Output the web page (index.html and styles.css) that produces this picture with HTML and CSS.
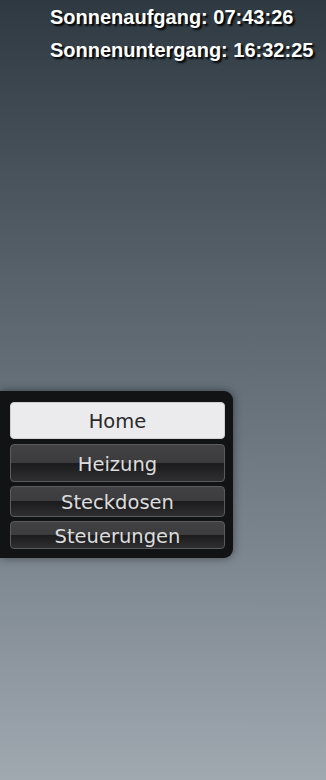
FILE: index.html
```html
<!DOCTYPE html>
<html lang="de">
<head>
<meta charset="utf-8">
<title>Haus</title>
<link rel="stylesheet" href="styles.css">
</head>
<body>
<div class="sun">
  <div class="sun-line">Sonnenaufgang: 07:43:26</div>
  <div class="sun-line">Sonnenuntergang: 16:32:25</div>
</div>
<nav class="menu">
  <a class="btn active h-home">Home</a>
  <a class="btn h-heizung">Heizung</a>
  <a class="btn h-steck">Steckdosen</a>
  <a class="btn h-steuer">Steuerungen</a>
</nav>
</body>
</html>
```
FILE: styles.css
```css
html {
  height: 100%;
  background: linear-gradient(to bottom, #2e3941 0%, #56616a 35%, #7b858d 70%, #a0a8b0 100%);
}
body {
  margin: 0;
  height: 780px;
  overflow: hidden;
}
.sun {
  padding: 1px 0 0 50px;
  font-family: "Liberation Sans", Arial, sans-serif;
  font-weight: bold;
  font-size: 20px;
  line-height: 33px;
  color: #fff;
  text-shadow: 2px 2px 2px #000;
}
.menu {
  margin-top: 324px;
  width: 215px;
  padding: 11px 8px 9px 10px;
  background: #121314;
  border-radius: 0 9px 9px 0;
  box-shadow: 0 0 10px rgba(0, 0, 0, 0.45);
  display: flex;
  flex-direction: column;
}
.btn {
  box-sizing: border-box;
  display: flex;
  align-items: center;
  justify-content: center;
  padding-top: 2px;
  border: 1px solid #5c5c5e;
  border-radius: 4px;
  font-family: "DejaVu Sans", "Noto Sans", sans-serif;
  font-size: 19.5px;
  color: #dcdcdc;
  background: linear-gradient(to bottom, #424244 0%, #3c3c3e 49%, #1b1b1d 50%, #2f2f31 100%);
}
.btn.active {
  background: #ebebed;
  border-color: #d0d0d2;
  color: #2a2a2a;
}
.h-home { height: 37px; }
.h-heizung { height: 38px; margin-top: 5px; }
.h-steck { height: 31px; margin-top: 4px; }
.h-steuer { height: 28px; margin-top: 4px; }
```
